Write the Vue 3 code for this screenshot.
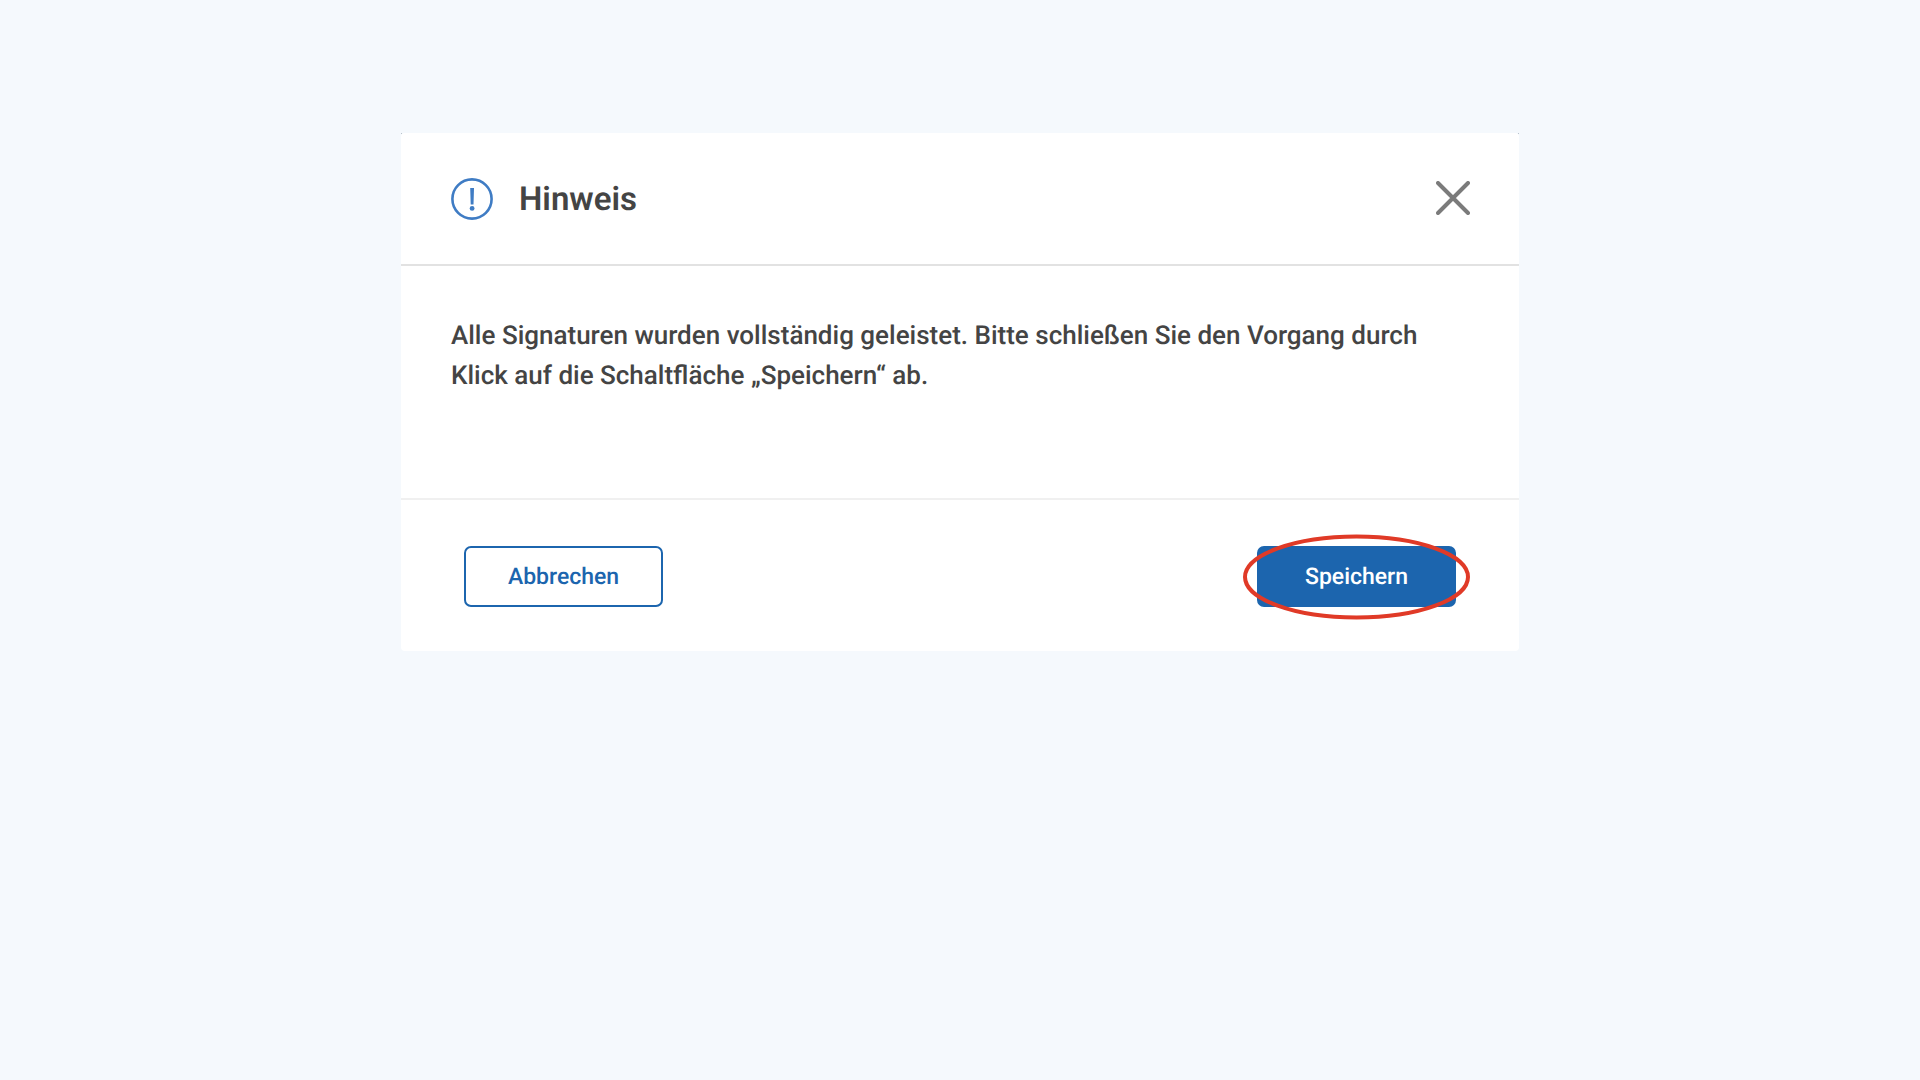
<script setup>
const title = 'Hinweis'
const message =
  'Alle Signaturen wurden vollständig geleistet. Bitte schließen Sie den Vorgang durch Klick auf die Schaltfläche „Speichern“ ab.'
</script>

<template>
  <main class="page">
    <section class="dialog" role="dialog" aria-labelledby="dialog-title" aria-describedby="dialog-message">
      <header class="dialog-header">
        <svg class="info-icon" viewBox="0 0 42 42" aria-hidden="true">
          <circle cx="21" cy="21" r="19.6" fill="none" stroke="#3f7cc4" stroke-width="2.6" />
          <path d="M19.2 10h3.8l-.5 16.4h-2.8z" fill="#3f7cc4" />
          <circle cx="21.1" cy="30.4" r="2.4" fill="#3f7cc4" />
        </svg>
        <h1 id="dialog-title" class="dialog-title">{{ title }}</h1>
        <button class="close-button" type="button" aria-label="Schließen">
          <svg class="close-icon" viewBox="0 0 34 34" aria-hidden="true">
            <path d="M2 2L32 32M32 2L2 32" fill="none" stroke="#7b7b7b" stroke-width="4" stroke-linecap="round" />
          </svg>
        </button>
      </header>

      <div class="dialog-body">
        <p id="dialog-message" class="message">{{ message }}</p>
      </div>

      <footer class="dialog-footer">
        <button class="button button-secondary" type="button">Abbrechen</button>
        <div class="highlighted">
          <button class="button button-primary" type="button">Speichern</button>
          <svg class="highlight-ring" viewBox="0 0 228 86" aria-hidden="true">
            <ellipse cx="113.5" cy="43" rx="111.5" ry="40.5" fill="none" stroke="#e03a27" stroke-width="4" />
          </svg>
        </div>
      </footer>
    </section>
  </main>
</template>

<style>
body {
  margin: 0;
  background: #f5f9fd;
}
</style>

<style scoped>
.page {
  box-sizing: border-box;
  min-height: 100vh;
  padding: 133px 24px 24px;
  background: #f5f9fd;
  color: #444444;
  font-family: Roboto, "Liberation Sans", sans-serif;
  text-rendering: geometricPrecision;
}

.dialog {
  position: relative;
  max-width: 1118px;
  margin: 0 auto;
  border-radius: 4px;
  background: #ffffff;
}

/* Faint dots in the two upper corners */
.dialog::before,
.dialog::after {
  content: "";
  position: absolute;
  top: 0;
  width: 1px;
  height: 1px;
  background: #b9c2cb;
}

.dialog::before {
  left: 0;
}

.dialog::after {
  right: 0;
}

.dialog-header {
  display: flex;
  align-items: center;
  gap: 26px;
  box-sizing: border-box;
  min-height: 133px;
  padding: 0 49px 0 50px;
  border-bottom: 2px solid #e2e2e2;
}

.info-icon {
  flex: none;
  width: 42px;
  height: 42px;
}

.dialog-title {
  flex: 1;
  margin: 0;
  padding-top: 2px;
  font-size: 33px;
  font-weight: 600;
  line-height: 40px;
}

.close-button {
  display: flex;
  padding: 0 0 2px;
  border: 0;
  background: none;
  cursor: pointer;
}

.close-icon {
  width: 34px;
  height: 34px;
}

.dialog-body {
  box-sizing: border-box;
  min-height: 232px;
  padding: 50px 63px 50px 50px;
}

.message {
  margin: 0;
  font-size: 26px;
  font-weight: 500;
  line-height: 40px;
}

.dialog-footer {
  display: flex;
  align-items: flex-start;
  justify-content: space-between;
  padding: 46px 63px 44px;
  border-top: 2px solid #f0f0f0;
}

.button {
  box-sizing: border-box;
  width: 199px;
  height: 61px;
  padding: 0;
  border: 2px solid #1c65ae;
  border-radius: 7px;
  font-family: inherit;
  font-size: 23px;
  font-weight: 500;
  line-height: 32px;
  text-rendering: inherit;
  cursor: pointer;
}

.button-secondary {
  background: #ffffff;
  color: #1c65ae;
}

.button-primary {
  background: #1c65ae;
  color: #ffffff;
}

.highlighted {
  display: flex;
  position: relative;
}

.highlight-ring {
  position: absolute;
  top: -12px;
  left: -14px;
  width: 228px;
  height: 86px;
  pointer-events: none;
}
</style>
